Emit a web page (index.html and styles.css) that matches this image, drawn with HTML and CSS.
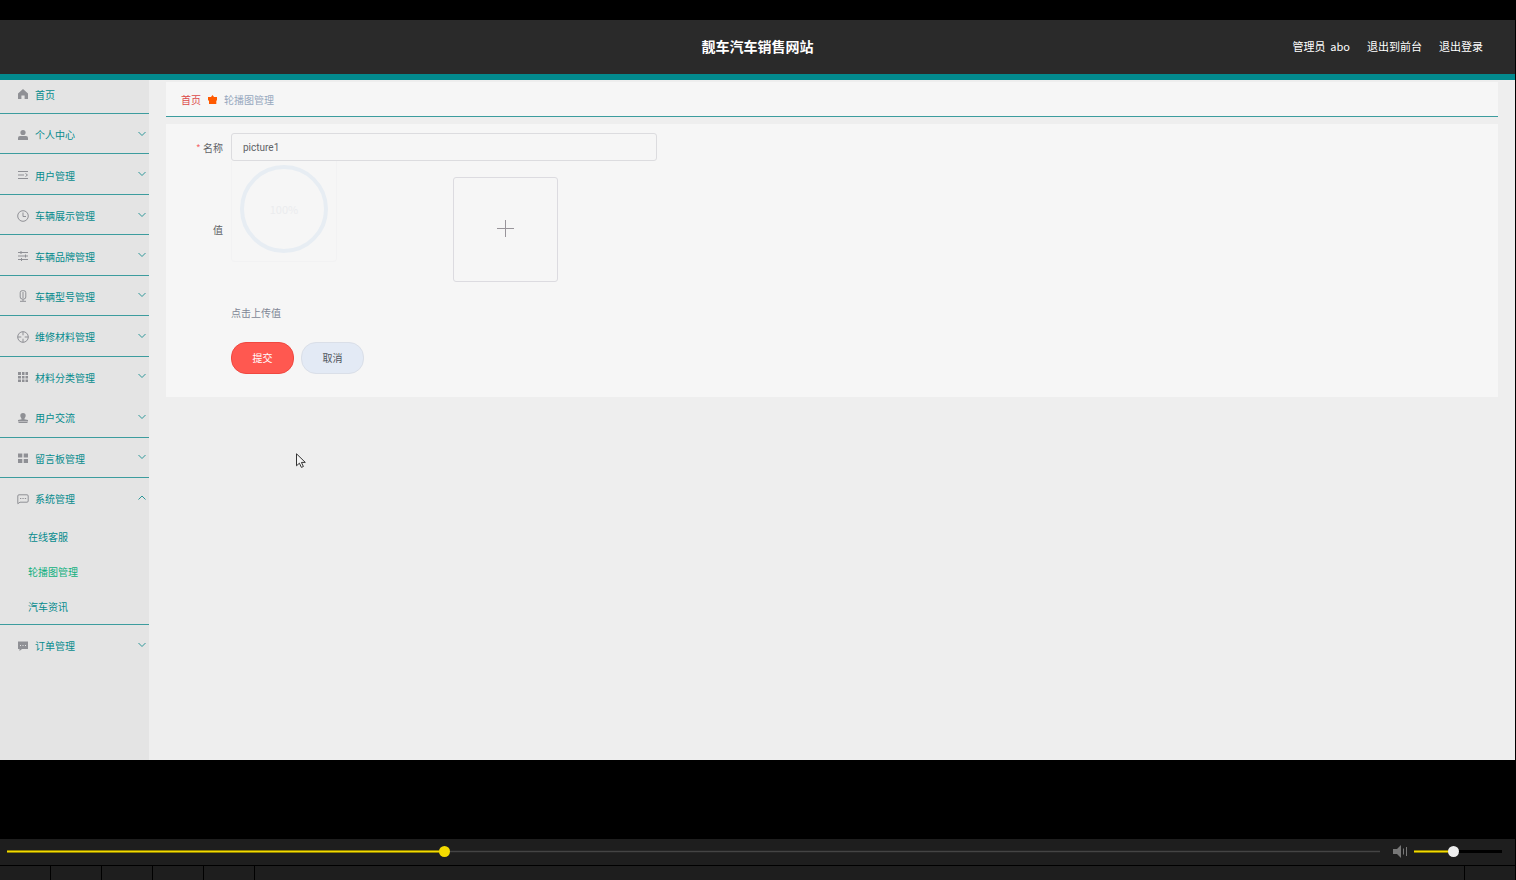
FILE: index.html
```
<!DOCTYPE html>
<html lang="zh-CN">
<head>
    <meta charset="UTF-8">
    <title>靓车汽车销售网站</title>
    <link rel="stylesheet" href="styles.css">
</head>
<body>
    <div class="screen">
        <header class="header">
            <h1 class="title">靓车汽车销售网站</h1>
            <nav class="user-nav">
                <span>管理员&nbsp; abo</span>
                <a href="#">退出到前台</a>
                <a href="#">退出登录</a>
            </nav>
        </header>
        <div class="container">
            <aside class="sidebar">
                <a class="menu-item home" href="#">
                    <svg class="icon" viewBox="0 0 12 12"><path fill="#8f9095" d="M6 1 1 5.6V11h3.4V7.5h3.2V11H11V5.600z"/></svg>
                    <span>首页</span>
                </a>
                <div class="menu">
                    <a class="menu-item" href="#">
                        <svg class="icon" viewBox="0 0 12 12"><circle cx="6" cy="3.500" r="2.600" fill="#8f9095"/><path fill="#8f9095" d="M1 11V8.800Q1 7 3 7h6q2 0 2 1.800V11z"/></svg>
                        <span>个人中心</span>
                        <svg class="arrow" viewBox="0 0 8 8"><path d="M.5 2 4 5.500 7.500 2"/></svg>
                    </a>
                    <a class="menu-item" href="#">
                        <svg class="icon line" viewBox="0 0 12 12"><path d="M1 2.500h10M1 6h6M1 9.500h10M8.500 4.500 10.500 6l-2 1.500"/></svg>
                        <span>用户管理</span>
                        <svg class="arrow" viewBox="0 0 8 8"><path d="M.5 2 4 5.500 7.500 2"/></svg>
                    </a>
                    <a class="menu-item" href="#">
                        <svg class="icon line" viewBox="0 0 12 12"><circle cx="6" cy="6" r="5.300"/><path d="M6 2.500V6.500h3"/></svg>
                        <span>车辆展示管理</span>
                        <svg class="arrow" viewBox="0 0 8 8"><path d="M.5 2 4 5.500 7.500 2"/></svg>
                    </a>
                    <a class="menu-item" href="#">
                        <svg class="icon line" viewBox="0 0 12 12"><path d="M1 2.500h10M1 6h10M1 9.500h10M4 1v3M8.500 4.500v3M4.500 8v3"/></svg>
                        <span>车辆品牌管理</span>
                        <svg class="arrow" viewBox="0 0 8 8"><path d="M.5 2 4 5.500 7.500 2"/></svg>
                    </a>
                    <a class="menu-item" href="#">
                        <svg class="icon line" viewBox="0 0 12 12"><rect x="3.200" y=".7" width="5.600" height="8.300" rx="2"/><path d="M6 9v2M3 11.300h6M5 3h2M5 5h2M5 7h2"/></svg>
                        <span>车辆型号管理</span>
                        <svg class="arrow" viewBox="0 0 8 8"><path d="M.5 2 4 5.500 7.500 2"/></svg>
                    </a>
                    <a class="menu-item" href="#">
                        <svg class="icon line" viewBox="0 0 12 12"><circle cx="6" cy="6" r="5.300"/><path d="M6 .7v3.600M6 7.700v3.600M.7 6h3.600M7.700 6h3.600"/></svg>
                        <span>维修材料管理</span>
                        <svg class="arrow" viewBox="0 0 8 8"><path d="M.5 2 4 5.500 7.500 2"/></svg>
                    </a>
                    <a class="menu-item no-line" href="#">
                        <svg class="icon" viewBox="0 0 12 12"><path fill="#8f9095" d="M1 1h3v3H1zM5 1h2.500v3H5zM8.500 1H11v3H8.500zM1 5h3v2.500H1zM5 5h2.500v2.500H5zM8.500 5H11v2.500H8.500zM1 8.500h3V11H1zM5 8.500h2.500V11H5zM8.500 8.500H11V11H8.500z"/></svg>
                        <span>材料分类管理</span>
                        <svg class="arrow" viewBox="0 0 8 8"><path d="M.5 2 4 5.500 7.500 2"/></svg>
                    </a>
                    <a class="menu-item" href="#">
                        <svg class="icon" viewBox="0 0 12 12"><path fill="#8f9095" d="M3.300 3.700a2.700 2.700 0 0 1 5.400 0C8.700 5 7.500 6 7.300 7.200L11 8v1.500H1V8l3.700-.8C4.500 6 3.300 5 3.300 3.700zM1.500 10h9v1h-9z"/></svg>
                        <span>用户交流</span>
                        <svg class="arrow" viewBox="0 0 8 8"><path d="M.5 2 4 5.500 7.500 2"/></svg>
                    </a>
                    <a class="menu-item" href="#">
                        <svg class="icon" viewBox="0 0 12 12"><path fill="#8f9095" d="M1 1.500h4.300v4H1zM6.700 1.500H11v4H6.700zM1 7h4.300v4H1zM6.700 7H11v4H6.700z"/></svg>
                        <span>留言板管理</span>
                        <svg class="arrow" viewBox="0 0 8 8"><path d="M.5 2 4 5.500 7.500 2"/></svg>
                    </a>
                </div>
                <div class="menu-group">
                    <a class="menu-item no-line" href="#">
                        <svg class="icon line" viewBox="0 0 12 12"><path d="M2 1.800h8q1.200 0 1.200 1.200v5q0 1.200-1.200 1.200H3L.8 10.700V3q0-1.200 1.200-1.200z"/><path d="M3 5.500h1.300M5.400 5.500h1.300M7.800 5.500h1.300"/></svg>
                        <span>系统管理</span>
                        <svg class="arrow" viewBox="0 0 8 8"><path d="M.5 5.500 4 2l3.500 3.500"/></svg>
                    </a>
                    <a class="sub-item" href="#">在线客服</a>
                    <a class="sub-item active" href="#">轮播图管理</a>
                    <a class="sub-item" href="#">汽车资讯</a>
                </div>
                <a class="menu-item no-line" href="#">
                    <svg class="icon" viewBox="0 0 12 12"><path fill="#8f9095" d="M1 1.500h10V9H5l-2.500 2V9H1z"/><path stroke="#e4e4e4" d="M3 5.500h1M5.500 5.500h1M8 5.500h1"/></svg>
                    <span>订单管理</span>
                    <svg class="arrow" viewBox="0 0 8 8"><path d="M.5 2 4 5.500 7.500 2"/></svg>
                </a>
            </aside>
            <main class="main">
                <nav class="breadcrumb">
                    <a href="#">首页</a>
                    <svg class="crumb-icon" viewBox="0 0 9 9"><path fill="#ff5a00" d="M3 2 4.500 0 6 2h3v3.500h-.7V9H1V5.500H0V2z"/></svg>
                    <span>轮播图管理</span>
                </nav>
                <form class="card">
                    <div class="row">
                        <label class="label" for="name"><span class="star">*</span> 名称</label>
                        <input class="input" type="text" id="name" value="picture1">
                    </div>
                    <div class="row upload-row">
                        <span class="label">值</span>
                        <div class="progress">
                            <svg class="ring" viewBox="0 0 88 88"><circle cx="44" cy="44" r="42"/></svg>
                            <span class="percent">100%</span>
                        </div>
                        <button class="upload" type="button" aria-label="上传">
                            <svg viewBox="0 0 17 17"><path stroke="#98949a" d="M8.500 0v17M0 8.500h17"/></svg>
                        </button>
                    </div>
                    <p class="tip">点击上传值</p>
                    <div class="buttons">
                        <button class="btn submit" type="submit">提交</button>
                        <button class="btn cancel" type="button">取消</button>
                    </div>
                </form>
                <svg class="cursor" viewBox="0 0 10 15"><path fill="#f4f4f4" stroke="#333" d="M.5.8v12l2.900-2.600 2 4.200 2-.9-2-4.100h3.900z"/></svg>
            </main>
        </div>
    </div>
    <footer class="player">
        <div class="controls">
            <input class="range seek" type="range" min="0" max="1000" value="317" aria-label="进度">
            <svg class="speaker" viewBox="0 0 15 13"><path fill="#777" d="M0 4h4l4-4v13L4 9H0z"/><path stroke="#777" d="M10.500 3.500v6M13.500 2v9"/></svg>
            <input class="range volume" type="range" min="0" max="100" value="44" aria-label="音量">
        </div>
        <div class="cells">
            <div class="cell"></div>
            <div class="cell"></div>
            <div class="cell"></div>
            <div class="cell"></div>
            <div class="cell"></div>
            <div class="cell wide"></div>
            <div class="cell"></div>
        </div>
    </footer>
</body>
</html>
```
FILE: styles.css
```
* {
    box-sizing: border-box;
}
body {
    margin: 0;
    min-height: 100vh;
    display: flex;
    flex-direction: column;
    background: #000;
    font-family: "Noto Sans CJK SC", sans-serif;
    font-size: 10px;
}
a {
    color: inherit;
    text-decoration: none;
}
.screen {
    flex: 1;
    display: flex;
    flex-direction: column;
    margin: 20px 1px 79px 0;
}

/* header */
.header {
    display: grid;
    grid-template-columns: 1fr auto 1fr;
    align-items: center;
    height: 60px;
    padding: 0 32px 2px;
    background: #2a2a2a;
    border-bottom: 6px solid #028a8e;
    color: #fff;
}
.title {
    grid-column: 2;
    margin: 0;
    font-size: 14px;
    font-weight: bold;
}
.user-nav {
    display: flex;
    justify-content: flex-end;
    gap: 17px;
    font-size: 11px;
}
.container {
    flex: 1;
    display: flex;
}

/* sidebar */
.sidebar {
    width: 149px;
    background: #e4e4e4;
    color: #048b8d;
}
.menu {
    display: grid;
    grid-template-rows: repeat(9, 1fr);
    height: 364px;
}
.menu-item {
    display: flex;
    align-items: center;
    height: 41px;
    padding: 1px 3px 0 17px;
    border-bottom: 1px solid #3c9c9e;
}
.menu .menu-item {
    height: auto;
    padding-top: 2px;
}
.home {
    height: 34px;
    padding-bottom: 6px;
}
.no-line {
    border-bottom-color: transparent;
}
.icon {
    width: 12px;
    height: 12px;
    margin-right: 6px;
    fill: none;
}
.line {
    stroke: #8f9095;
}
.arrow {
    width: 8px;
    height: 8px;
    margin: 0 0 2px auto;
    fill: none;
    stroke: #2c9698;
}
.menu-group {
    border-bottom: 1px solid #3c9c9e;
}
.sub-item {
    display: block;
    height: 35px;
    line-height: 35px;
    padding-left: 28px;
}
.active {
    color: #10b080;
}

/* content */
.main {
    position: relative;
    flex: 1;
    padding: 2px 17px 0;
    background: #eee;
}
.breadcrumb {
    display: flex;
    align-items: center;
    height: 35px;
    padding: 0 15px;
    background: #f6f6f6;
    border-bottom: 1px solid #3c9c9e;
    color: #97a8be;
}
.breadcrumb a {
    color: #dc4a4a;
}
.crumb-icon {
    width: 9px;
    height: 9px;
    margin: 0 7px;
}
.card {
    margin-top: 7px;
    padding: 9px 0 23px;
    background: #f6f6f6;
}
.row {
    display: flex;
    align-items: center;
}
.label {
    width: 65px;
    padding-right: 8px;
    text-align: right;
    color: #606266;
}
.star {
    color: #f56c6c;
}
.input {
    width: 426px;
    height: 28px;
    padding: 0 11px;
    border: 1px solid #dcdcdf;
    border-radius: 3px;
    background: #f6f6f6;
    color: #606266;
    font-family: Roboto, sans-serif;
    font-size: 10px;
}
.upload-row {
    height: 136px;
}
.progress {
    display: grid;
    place-items: center;
    align-self: flex-start;
    width: 106px;
    height: 101px;
    padding-bottom: 4px;
    border: 1px solid #f2f2f3;
    border-top: none;
    border-radius: 0 0 4px 4px;
}
.ring,
.percent {
    grid-area: 1 / 1;
}
.ring {
    width: 88px;
    height: 88px;
    fill: none;
    stroke: #e7edf3;
    stroke-width: 4px;
}
.percent {
    color: #ebecee;
    font-size: 11px;
}
.upload {
    display: grid;
    place-items: center;
    width: 105px;
    height: 105px;
    margin-left: 116px;
    padding: 0 0 2px;
    border: 1px solid #dcdbe0;
    border-radius: 3px;
    background: #f6f6f6;
}
.upload svg {
    width: 17px;
    height: 17px;
}
.tip {
    margin: 2px 0 15px 65px;
    line-height: 28px;
    color: #808695;
}
.buttons {
    display: flex;
    gap: 7px;
    margin-left: 65px;
}
.btn {
    width: 63px;
    height: 32px;
    padding: 0 0 2px;
    border: 1px solid #dadfe8;
    border-radius: 15px;
    font-family: inherit;
    font-size: 10px;
}
.submit {
    background: #ff5850;
    border-color: #f04840;
    color: #fff;
}
.cancel {
    background: #e3eaf5;
    color: #50555c;
}
.cursor {
    position: absolute;
    left: 147px;
    top: 373px;
    width: 10px;
    height: 15px;
}

/* player bar */
.player {
    margin-right: 1px;
}
.controls {
    display: flex;
    align-items: center;
    height: 26px;
    padding: 0 13px 1px 7px;
    background: #1e1e1e;
}
.range {
    appearance: none;
    height: 11px;
    margin: 0;
    background: transparent;
}
.range::-webkit-slider-runnable-track {
    height: 3px;
}
.range::-webkit-slider-thumb {
    appearance: none;
    width: 11px;
    height: 11px;
    margin-top: -4px;
    border-radius: 50%;
    background: #f4da00;
}
.seek {
    flex: 1;
}
.seek::-webkit-slider-runnable-track {
    background:
        linear-gradient(to right, #f4da00 32%, #444 32%) center / 100% 1px no-repeat,
        linear-gradient(to right, #8f8200 32%, #262626 32%);
}
.speaker {
    width: 15px;
    height: 13px;
    margin: 0 6px 0 13px;
}
.volume {
    width: 88px;
}
.volume::-webkit-slider-runnable-track {
    background:
        linear-gradient(to right, #f4da00 44%, #000 44%) center / 100% 1px no-repeat,
        linear-gradient(to right, #8f8200 44%, #000 44%);
}
.volume::-webkit-slider-thumb {
    background: #eee;
}
.cells {
    display: flex;
    gap: 1px;
    height: 15px;
    padding-top: 1px;
}
.cell {
    width: 50px;
    background: #1e1e1e;
}
.wide {
    flex: 1;
}
```
